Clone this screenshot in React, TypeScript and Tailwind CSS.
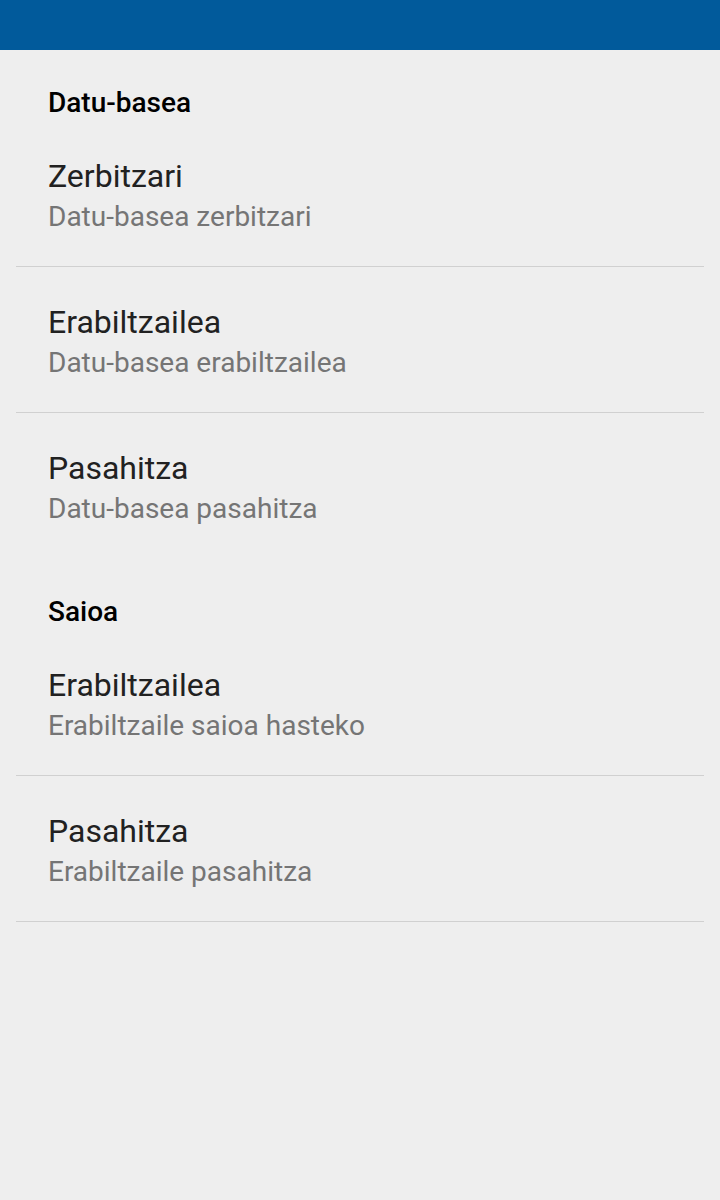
const sections = [
  {
    title: "Datu-basea",
    closed: false,
    items: [
      { name: "Zerbitzari", summary: "Datu-basea zerbitzari" },
      { name: "Erabiltzailea", summary: "Datu-basea erabiltzailea" },
      { name: "Pasahitza", summary: "Datu-basea pasahitza" },
    ],
  },
  {
    title: "Saioa",
    closed: true,
    items: [
      { name: "Erabiltzailea", summary: "Erabiltzaile saioa hasteko" },
      { name: "Pasahitza", summary: "Erabiltzaile pasahitza" },
    ],
  },
];

export default function App() {
  return (
    <div className="min-h-screen bg-[#eeeeee] font-[Roboto,sans-serif]">
      <header className="h-[50px] bg-[#015a9b]" />
      <main className="px-4">
        {sections.map((section) => (
          <section key={section.title}>
            <h2 className="px-8 pt-[35px] text-[28px] leading-9 font-medium text-black">
              {section.title}
            </h2>
            <ul>
              {section.items.map((item, i) => (
                <li
                  key={item.name}
                  className={
                    section.closed || i < section.items.length - 1
                      ? "border-b border-[#d0d0d0]"
                      : "border-b border-transparent"
                  }
                >
                  <button
                    type="button"
                    className="block w-full px-8 pt-8 pb-[31px] text-left"
                  >
                    <span className="block text-[32px] leading-[46px] text-[#212121]">
                      {item.name}
                    </span>
                    <span className="block text-[28px] leading-9 text-[#757575]">
                      {item.summary}
                    </span>
                  </button>
                </li>
              ))}
            </ul>
          </section>
        ))}
      </main>
    </div>
  );
}
